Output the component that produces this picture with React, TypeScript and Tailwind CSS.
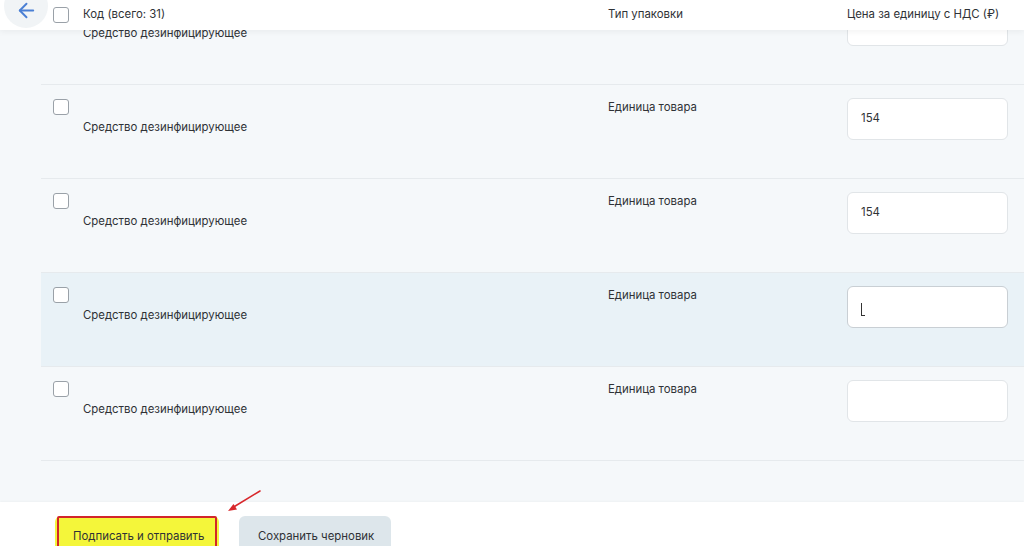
import React from "react";
import { ArrowLeft } from "lucide-react";

type Row = { name: string; pack: string; price: string; active?: boolean; caret?: boolean };

const rows: Row[] = [
  { name: "Средство дезинфицирующее", pack: "", price: "" },
  { name: "Средство дезинфицирующее", pack: "Единица товара", price: "154" },
  { name: "Средство дезинфицирующее", pack: "Единица товара", price: "154" },
  { name: "Средство дезинфицирующее", pack: "Единица товара", price: "", active: true, caret: true },
  { name: "Средство дезинфицирующее", pack: "Единица товара", price: "" },
];

function Box() {
  return <div className="w-4 h-4 rounded-[3px] border border-[#9aa1a8] bg-white shrink-0" />;
}

function ItemRow({ row }: { row: Row }) {
  return (
    <div
      className={`flex h-[94px] border-b border-[#e6eaed] pr-4 ${row.active ? "bg-[#e9f2f7]" : ""}`}
    >
      <div className="w-[567px] shrink-0 pl-3 pt-[14px]">
        <Box />
        <div className="ml-[30px] mt-[3px] leading-[18px]">{row.name}</div>
      </div>
      <div className="w-[239px] shrink-0 pt-[14px] leading-4">{row.pack}</div>
      <div className="pt-[13px]">
        <div
          className={`w-[161px] h-[42px] rounded-md bg-white border flex items-center px-[13px] ${
            row.active ? "border-[#c9cfd4]" : "border-[#e1e5e8]"
          }`}
        >
          {row.caret ? <span className="w-[4px] h-[13px] border-l border-b border-[#333] mt-1" /> : row.price}
        </div>
      </div>
    </div>
  );
}

export default function App() {
  return (
    <div
      className="relative w-[1024px] h-[546px] overflow-hidden bg-[#f5f8fa] text-[11.4px] text-[#2f3236]"
      style={{ fontFamily: "Inter, 'Noto Sans', sans-serif" }}
    >
      <div className="flex flex-col h-full">
        <div className="pl-[41px] mt-[-9px]">
          {rows.map((r, i) => (
            <ItemRow key={i} row={r} />
          ))}
        </div>
        <div className="flex-1" />
        <div className="h-[44px] bg-white flex items-start gap-5 pl-[55px] pt-[14px] shadow-[0_-1px_2px_rgba(0,0,0,0.03)]">
          <div className="relative w-[164px] h-[42px] rounded-md bg-[#f4f63a] flex items-center pl-[18px] text-[#2f3236]">
            <div className="absolute left-[2px] right-[2px] top-0 h-[34px] border-2 border-[#d2262a] rounded-[2px]" />
            <span className="relative">Подписать и отправить</span>
          </div>
          <div className="w-[152px] h-[42px] rounded-md bg-[#dde6eb] flex items-center pl-[19px] text-[#2f3236]">
            Сохранить черновик
          </div>
        </div>
      </div>

      {/* sticky table header */}
      <div className="absolute left-0 top-0 right-0 h-[30px] bg-white shadow-[0_2px_6px_rgba(0,0,0,0.05)] flex items-center">
        <div className="absolute left-[4px] top-[-16px] w-[44px] h-[44px] rounded-full bg-[#f1f4f6]" />
        <ArrowLeft className="absolute left-[15px] top-[-1px] text-[#4a7fd4]" size={23} strokeWidth={2} />
        <div className="pl-[53px] flex items-center w-[608px] shrink-0">
          <Box />
          <span className="ml-[14px]">Код (всего: 31)</span>
        </div>
        <div className="w-[239px] shrink-0">Тип упаковки</div>
        <div>Цена за единицу с НДС (₽)</div>
      </div>

      {/* annotation arrow */}
      <svg className="absolute left-[224px] top-[488px]" width="40" height="26" viewBox="0 0 40 26">
        <line x1="36" y1="3" x2="8" y2="20" stroke="#d8282c" strokeWidth="1.6" strokeLinecap="round" />
        <path d="M4 23 L13 21.5 L9.5 16 Z" fill="#d8282c" />
      </svg>
    </div>
  );
}
